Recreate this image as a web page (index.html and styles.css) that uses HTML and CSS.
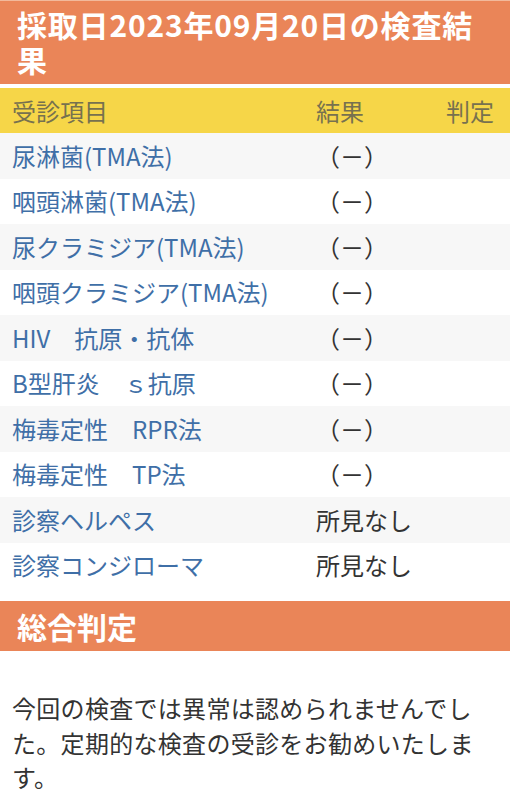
FILE: index.html
```html
<!DOCTYPE html>
<html lang="ja">
<head>
<meta charset="utf-8">
<title>検査結果</title>
<link rel="stylesheet" href="styles.css">
</head>
<body>
<h1 class="title">採取日2023年09月20日の検査結果</h1>
<div class="table">
  <div class="row head">
    <div class="c-item">受診項目</div>
    <div class="c-res">結果</div>
    <div class="c-judge">判定</div>
  </div>
  <div class="row odd"><div class="c-item">尿淋菌(TMA法)</div><div class="c-res">（－）</div><div class="c-judge"></div></div>
  <div class="row"><div class="c-item">咽頭淋菌(TMA法)</div><div class="c-res">（－）</div><div class="c-judge"></div></div>
  <div class="row odd"><div class="c-item">尿クラミジア(TMA法)</div><div class="c-res">（－）</div><div class="c-judge"></div></div>
  <div class="row"><div class="c-item">咽頭クラミジア(TMA法)</div><div class="c-res">（－）</div><div class="c-judge"></div></div>
  <div class="row odd"><div class="c-item">HIV　抗原・抗体</div><div class="c-res">（－）</div><div class="c-judge"></div></div>
  <div class="row"><div class="c-item">B型肝炎　ｓ抗原</div><div class="c-res">（－）</div><div class="c-judge"></div></div>
  <div class="row odd"><div class="c-item">梅毒定性　RPR法</div><div class="c-res">（－）</div><div class="c-judge"></div></div>
  <div class="row"><div class="c-item">梅毒定性　TP法</div><div class="c-res">（－）</div><div class="c-judge"></div></div>
  <div class="row odd"><div class="c-item">診察ヘルペス</div><div class="c-res">所見なし</div><div class="c-judge"></div></div>
  <div class="row"><div class="c-item">診察コンジローマ</div><div class="c-res">所見なし</div><div class="c-judge"></div></div>
</div>
<h2 class="section">総合判定</h2>
<p class="summary">今回の検査では異常は認められませんでした。定期的な検査の受診をお勧めいたします。</p>
</body>
</html>
```

FILE: styles.css
```css
html, body {
  margin: 0;
  padding: 0;
  background: #ffffff;
}
body {
  font-family: "Noto Sans CJK JP", "Noto Sans", sans-serif;
  width: 510px;
}
.title {
  margin: 0;
  background: #ea8558;
  border-top: 1px solid #f2b99b;
  color: #ffffff;
  font-size: 30px;
  font-weight: 700;
  letter-spacing: 0.8px;
  line-height: 35px;
  padding: 6px 17px 7px 17px;
}
.table {
  margin-top: 4px;
}
.row {
  display: grid;
  grid-template-columns: 304px 130px 46px;
  padding: 0 18px 0 12px;
  height: 45.5px;
  align-items: center;
  font-size: 24px;
  line-height: 30px;
  white-space: nowrap;
}
.row.head {
  background: #f6d648;
  height: 45px;
  color: #77714f;
}
.row.odd {
  background: #f7f7f7;
}
.c-item {
  color: #3f6fa7;
}
.head .c-item {
  color: #77714f;
}
.c-res {
  color: #333333;
}
.head .c-res {
  color: #77714f;
}
.section {
  margin: 13px 0 0 0;
  background: #ea8558;
  color: #ffffff;
  font-size: 30px;
  font-weight: 700;
  line-height: 50px;
  height: 50px;
  padding: 0 17px;
}
.summary {
  margin: 40px 0 0 0;
  padding: 0 0 0 12px;
  width: 470px;
  font-size: 24px;
  line-height: 34.5px;
  color: #333333;
  letter-spacing: 0.3px;
}
```
